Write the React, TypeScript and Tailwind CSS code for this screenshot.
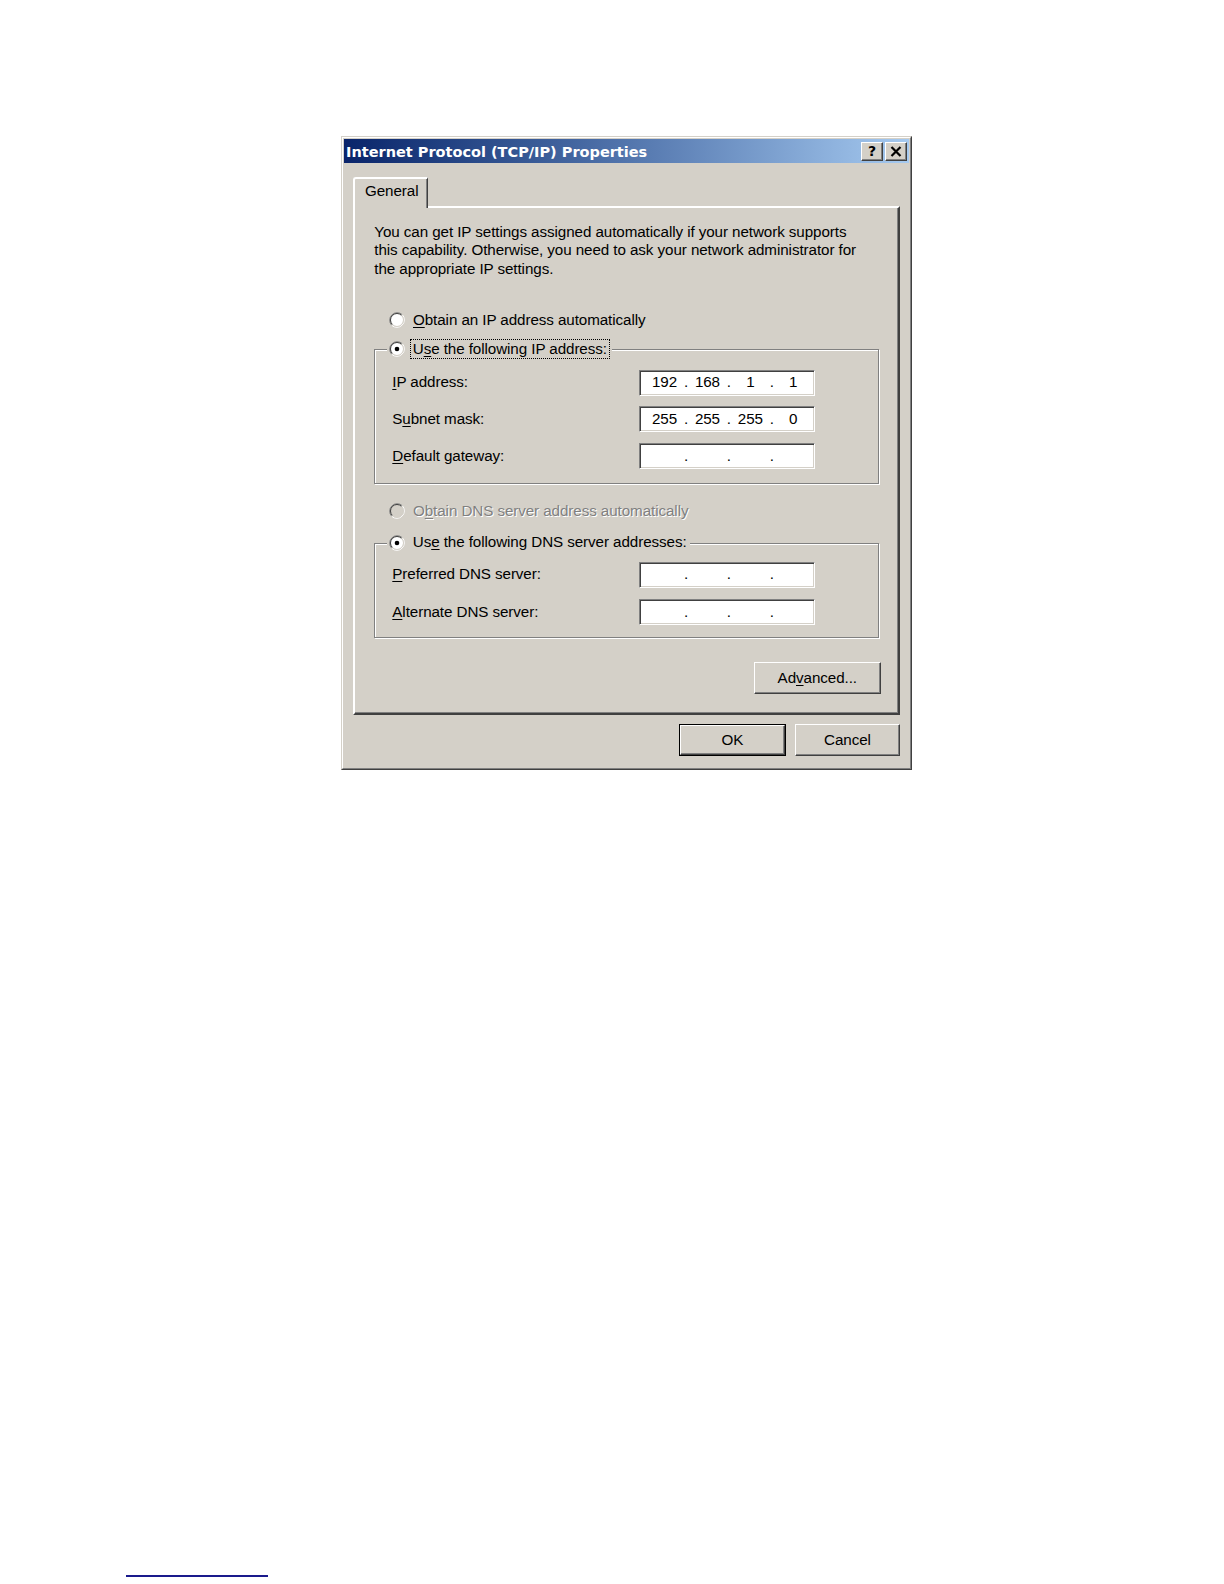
import React from 'react';

const raised =
  'border border-t-white border-l-white border-r-[#404040] border-b-[#404040] shadow-[inset_-1px_-1px_0_#808080]';
const sunken =
  'border border-t-[#808080] border-l-[#808080] border-r-white border-b-white shadow-[inset_1px_1px_0_#404040,inset_-1px_-1px_0_#d4d0c8]';

const Radio = ({ checked = false, disabled = false }: { checked?: boolean; disabled?: boolean }) => (
  <svg width="16" height="16" viewBox="0 0 16 16" className="shrink-0">
    <circle cx="8" cy="8" r="6.2" fill={disabled ? '#d4d0c8' : '#ffffff'} />
    <path d="M2.7 13.3A7.5 7.5 0 0 1 13.3 2.7" stroke="#808080" fill="none" />
    <path d="M13.3 2.7A7.5 7.5 0 0 1 2.7 13.3" stroke="#ffffff" fill="none" />
    <path d="M3.4 12.6A6.5 6.5 0 0 1 12.6 3.4" stroke="#404040" fill="none" />
    <path d="M12.6 3.4A6.5 6.5 0 0 1 3.4 12.6" stroke="#d4d0c8" fill="none" />
    {checked && <circle cx="8" cy="8" r="2.3" fill="#000000" />}
  </svg>
);

const IpField = ({ octets }: { octets: string[] }) => (
  <div className={`flex h-[26px] w-[176px] items-center bg-white pl-[6px] ${sunken}`}>
    {octets.map((o, i) => (
      <React.Fragment key={i}>
        <span className="w-[36.5px] text-center">{o}</span>
        {i < 3 && <span className="w-[6.4px] text-center">.</span>}
      </React.Fragment>
    ))}
  </div>
);

const Row = ({ label, octets, className = '' }: { label: React.ReactNode; octets: string[]; className?: string }) => (
  <div className={`ml-[17px] flex items-center ${className}`}>
    <span className="w-[247px]">{label}</span>
    <IpField octets={octets} />
  </div>
);

const empty = ['', '', '', ''];

export default function App() {
  return (
    <div className="min-h-[1584px] bg-white font-['Liberation_Sans',Arial,sans-serif] text-[15.2px] tracking-[-0.08px] text-black">
      <div className="pt-[136px] pl-[341px]">
        {/* window frame */}
        <div className="h-[634px] w-[571px] border border-t-[#d4d0c8] border-l-[#d4d0c8] border-r-[#404040] border-b-[#404040] bg-[#d4d0c8]">
          <div className="h-full border border-t-white border-l-white border-r-[#808080] border-b-[#808080] p-[1px]">
            {/* title bar */}
            <div className="flex h-[24px] items-center bg-gradient-to-r from-[#0a246a] to-[#a6caf0] pl-[2px] pr-[2px]">
              <span className="mt-[3px] font-['DejaVu_Sans',sans-serif] text-[14.5px] font-bold tracking-normal text-white">
                Internet Protocol (TCP/IP) Properties
              </span>
              <div className="ml-auto flex gap-[2px]">
                <div className={`flex h-[19px] w-[22px] items-center justify-center bg-[#d4d0c8] ${raised}`}>
                  <span className="font-['DejaVu_Sans',sans-serif] text-[14px] font-bold leading-none tracking-normal">?</span>
                </div>
                <div className={`flex h-[19px] w-[22px] items-center justify-center bg-[#d4d0c8] ${raised}`}>
                  <svg width="12" height="11" viewBox="0 0 12 11">
                    <path d="M1.5 1L10.5 10M10.5 1L1.5 10" stroke="#000" strokeWidth="2.2" />
                  </svg>
                </div>
              </div>
            </div>

            {/* body */}
            <div className="px-[9px] pt-[13.5px]">
              {/* tab */}
              <div className="relative z-10 -mb-[2px] flex h-[31.3px] w-[75px] items-start rounded-tl-[3px] border-l-2 border-t-2 border-r border-l-white border-t-white border-r-[#404040] bg-[#d4d0c8] pl-[10px] pt-[1px] shadow-[inset_-1px_0_0_#808080]">
                General
              </div>

              {/* tab panel */}
              <div className="h-[509px] border-2 border-t-white border-l-white border-r-[#404040] border-b-[#404040] shadow-[inset_-1px_-1px_0_#808080]">
                <p className="pl-[19.3px] pt-[14.8px] leading-[18.8px]">
                  You can get IP settings assigned automatically if your network supports
                  <br />
                  this capability. Otherwise, you need to ask your network administrator for
                  <br />
                  the appropriate IP settings.
                </p>

                <div className="ml-[34px] mt-[31px] flex h-[20px] items-center gap-[8px]">
                  <Radio />
                  <span>
                    <span className="underline underline-offset-2">O</span>btain an IP address automatically
                  </span>
                </div>

                {/* IP group */}
                <div className="ml-[19.3px] mt-[19.4px] h-[134.5px] w-[505px] border border-[#808080] shadow-[inset_1px_1px_0_#fff,1px_1px_0_#fff]">
                  <div className="-mt-[11px] ml-[11.5px] flex h-[20px] w-fit items-center gap-[5px] bg-[#d4d0c8] px-[2px]">
                    <Radio checked />
                    <span className="border border-dotted border-black px-[2px] leading-[18px]">
                      U<span className="underline underline-offset-2">s</span>e the following IP address:
                    </span>
                  </div>
                  <Row
                    className="mt-[10.2px]"
                    label={
                      <>
                        <span className="underline underline-offset-2">I</span>P address:
                      </>
                    }
                    octets={['192', '168', '1', '1']}
                  />
                  <Row
                    className="mt-[10.8px]"
                    label={
                      <>
                        S<span className="underline underline-offset-2">u</span>bnet mask:
                      </>
                    }
                    octets={['255', '255', '255', '0']}
                  />
                  <Row
                    className="mt-[10.8px]"
                    label={
                      <>
                        <span className="underline underline-offset-2">D</span>efault gateway:
                      </>
                    }
                    octets={empty}
                  />
                </div>

                <div className="ml-[34px] mt-[17.3px] flex h-[20px] items-center gap-[8px]">
                  <Radio disabled />
                  <span className="text-[#808080] [text-shadow:1px_1px_0_#ffffff]">
                    O<span className="underline underline-offset-2">b</span>tain DNS server address automatically
                  </span>
                </div>

                {/* DNS group */}
                <div className="ml-[19.3px] mt-[21.4px] h-[95px] w-[505px] border border-[#808080] shadow-[inset_1px_1px_0_#fff,1px_1px_0_#fff]">
                  <div className="-mt-[11px] ml-[11.5px] flex h-[20px] w-fit items-center gap-[8px] bg-[#d4d0c8] pl-[2px] pr-[3px]">
                    <Radio checked />
                    <span>
                      Us<span className="underline underline-offset-2">e</span> the following DNS server addresses:
                    </span>
                  </div>
                  <Row
                    className="mt-[9.2px]"
                    label={
                      <>
                        <span className="underline underline-offset-2">P</span>referred DNS server:
                      </>
                    }
                    octets={empty}
                  />
                  <Row
                    className="mt-[11.4px]"
                    label={
                      <>
                        <span className="underline underline-offset-2">A</span>lternate DNS server:
                      </>
                    }
                    octets={empty}
                  />
                </div>

                <div className="ml-[399px] mt-[24.3px] flex">
                  <button className={`flex h-[32.4px] w-[126.5px] items-center justify-center bg-[#d4d0c8] ${raised}`}>
                    Ad<span className="underline underline-offset-2">v</span>anced...
                  </button>
                </div>
              </div>

              {/* dialog buttons */}
              <div className="mt-[9px] flex justify-end gap-[9px]">
                <div className="h-[32.4px] w-[107px] border border-black">
                  <button className={`flex h-full w-full items-center justify-center bg-[#d4d0c8] ${raised}`}>OK</button>
                </div>
                <button className={`flex h-[32.4px] w-[105px] items-center justify-center bg-[#d4d0c8] ${raised}`}>
                  Cancel
                </button>
              </div>
            </div>
          </div>
        </div>
      </div>

      <div className="ml-[126.4px] mt-[805px] h-[2px] w-[141.7px] bg-[#1a1a8c]" />
    </div>
  );
}
